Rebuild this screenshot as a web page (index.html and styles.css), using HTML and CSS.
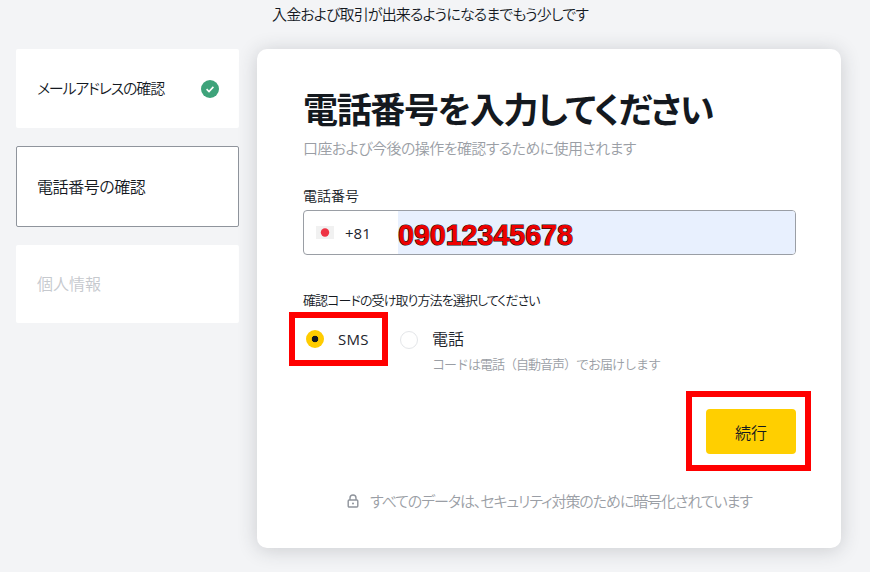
FILE: index.html
```html
<!DOCTYPE html>
<html lang="ja">
<head>
<meta charset="utf-8">
<title>電話番号を入力してください</title>
<link rel="stylesheet" href="styles.css">
</head>
<body>
<p class="top-note">入金および取引が出来るようになるまでもう少しです</p>
<div class="layout">
  <nav class="steps">
    <div class="step step-done"><span>メールアドレスの確認</span>
      <svg class="check" width="18" height="18" viewBox="0 0 18 18"><circle cx="9" cy="9" r="9" fill="#3ea37a"/><path d="M5.6 9.2l2.4 2.3 4.4-4.6" fill="none" stroke="#fff" stroke-width="1.6"/></svg>
    </div>
    <div class="step step-active"><span>電話番号の確認</span></div>
    <div class="step step-off"><span>個人情報</span></div>
  </nav>
  <main class="card">
    <h1 class="title">電話番号を入力してください</h1>
    <p class="subtitle">口座および今後の操作を確認するために使用されます</p>
    <label class="field-label">電話番号</label>
    <div class="phone">
      <div class="prefix">
        <svg class="flag" width="18" height="13" viewBox="0 0 18 13"><rect width="18" height="13" fill="#f1f1f1"/><circle cx="9" cy="6.5" r="4.2" fill="#ee3344"/></svg>
        <span>+81</span>
      </div>
      <div class="number"><span>09012345678</span></div>
    </div>
    <p class="method-label">確認コードの受け取り方法を選択してください</p>
    <div class="methods">
      <div class="marked method-sms">
        <span class="radio radio-on"></span><span class="method-name">SMS</span>
      </div>
      <div class="method-phone">
        <span class="radio"></span>
        <div>
          <div class="method-name method-tel">電話</div>
          <div class="method-hint">コードは電話（自動音声）でお届けします</div>
        </div>
      </div>
    </div>
    <div class="actions">
      <div class="marked action-mark"><button class="continue">続行</button></div>
    </div>
    <p class="secure">
      <svg width="12" height="14" viewBox="0 0 12 14"><path d="M3 6V4a3 3 0 0 1 6 0v2" fill="none" stroke="#8f949c" stroke-width="1.4"/><rect x="1.2" y="6" width="9.6" height="7" rx="1" fill="none" stroke="#8f949c" stroke-width="1.4"/><circle cx="6" cy="9.5" r="1" fill="#8f949c"/></svg>
      <span>すべてのデータは、セキュリティ対策のために暗号化されています</span>
    </p>
  </main>
</div>
</body>
</html>
```
FILE: styles.css
```css
* { box-sizing: border-box; }
html, body { margin: 0; height: 100%; }
body {
  width: 870px;
  height: 572px;
  overflow: hidden;
  background: #f3f4f6;
  color: #14191f;
  font-family: "Noto Sans CJK JP", "Noto Sans", sans-serif;
  font-size: 15px;
  font-feature-settings: "palt";
  font-weight: 350;
}
p { margin: 0; }
.top-note {
  height: 49px;
  padding: 4px 0 0 272px;
  line-height: 20px;
  letter-spacing: -0.87px;
}
.layout { display: flex; gap: 18px; padding-left: 16px; align-items: flex-start; }
.steps { width: 223px; display: flex; flex-direction: column; }
.step {
  display: flex;
  align-items: center;
  justify-content: space-between;
  background: #fff;
  border-radius: 2px;
  padding: 0 20px 0 21px;
  font-size: 16px;
}
.step span { position: relative; top: -1px; }
.step-done { height: 79px; margin-bottom: 18px; font-size: 15px; letter-spacing: -1.2px; }
.step-active { height: 81px; margin-bottom: 18px; border: 1px solid #8f949c; padding-left: 20px; letter-spacing: -0.43px; }
.step-off { height: 78px; color: #c6c9ce; }
.card {
  width: 584px;
  height: 499px;
  background: #fff;
  border-radius: 10px;
  box-shadow: 0 2px 20px rgba(40, 45, 55, 0.2);
  padding: 36px 45px 0 46px;
}
.title {
  margin: 0;
  font-size: 35px;
  line-height: 46px;
  font-weight: 700;
  letter-spacing: -1.35px;
  white-space: nowrap;
}
.subtitle { margin-top: 7px; line-height: 20px; color: #9a9ea5; letter-spacing: -0.58px; }
.field-label { display: block; margin-top: 27px; font-size: 14px; line-height: 20px; }
.phone {
  display: flex;
  height: 45px;
  margin-top: 5px;
  border: 1px solid #9a9ea5;
  border-radius: 4px;
  overflow: hidden;
}
.prefix {
  width: 94px;
  display: flex;
  align-items: center;
  gap: 11px;
  padding-left: 12px;
  font-family: "Open Sans", sans-serif;
  font-weight: 400;
  font-size: 15px;
  color: #1d242c;
}
.number {
  flex: 1;
  display: flex;
  align-items: center;
  padding-top: 6px;
  background: #e8f0fe;
  font-family: "Liberation Sans", sans-serif;
  font-weight: 700;
  font-size: 28.6px;
  color: #ee0000;
  -webkit-text-stroke: 1.2px #111;
  paint-order: stroke fill;
}
.method-label { margin-top: 35px; font-size: 13px; line-height: 20px; letter-spacing: -0.9px; white-space: nowrap; }
.methods { display: flex; align-items: flex-start; margin: 2px 0 0 -14px; }
.marked { border: 6px solid #f00; }
.method-sms {
  width: 99px;
  height: 54px;
  display: flex;
  align-items: center;
  gap: 14px;
  padding-left: 11px;
}
.radio {
  flex: none;
  width: 18px;
  height: 18px;
  border-radius: 50%;
  border: 1px solid #e4e6e9;
  background: #fff;
}
.radio-on { border: 0; background: radial-gradient(circle, #14191f 0 3px, #ffcc00 3.6px); }
.method-name { font-size: 15px; font-weight: 400; letter-spacing: 0.3px; font-family: "Open Sans", "Noto Sans CJK JP", sans-serif; color: #1d242c; }
.method-phone { display: flex; gap: 14px; margin: 15px 0 0 12px; }
.method-phone .radio { margin-top: 4px; }
.method-tel { font-family: "Noto Sans CJK JP", sans-serif; font-weight: 350; letter-spacing: 0; font-size: 16px; line-height: 22px; }
.method-hint { margin-top: 5px; font-size: 13px; line-height: 20px; font-feature-settings: normal; letter-spacing: -1px; color: #9a9ea5; }
.actions { display: flex; justify-content: flex-end; margin: 17px -15px 0 0; }
.action-mark { width: 125px; height: 80px; padding: 12px 14px; }
.continue {
  display: block;
  width: 90px;
  height: 45px;
  border: 0;
  border-radius: 4px;
  background: #ffcf00;
  color: #14191f;
  font: 350 16px/1 "Noto Sans CJK JP", sans-serif;
  padding: 0;
}
.secure {
  display: flex;
  align-items: center;
  gap: 11px;
  margin: 20px 0 0 44px;
  color: #9a9ea5;
  line-height: 20px;
  letter-spacing: -1.07px;
  white-space: nowrap;
}
```
